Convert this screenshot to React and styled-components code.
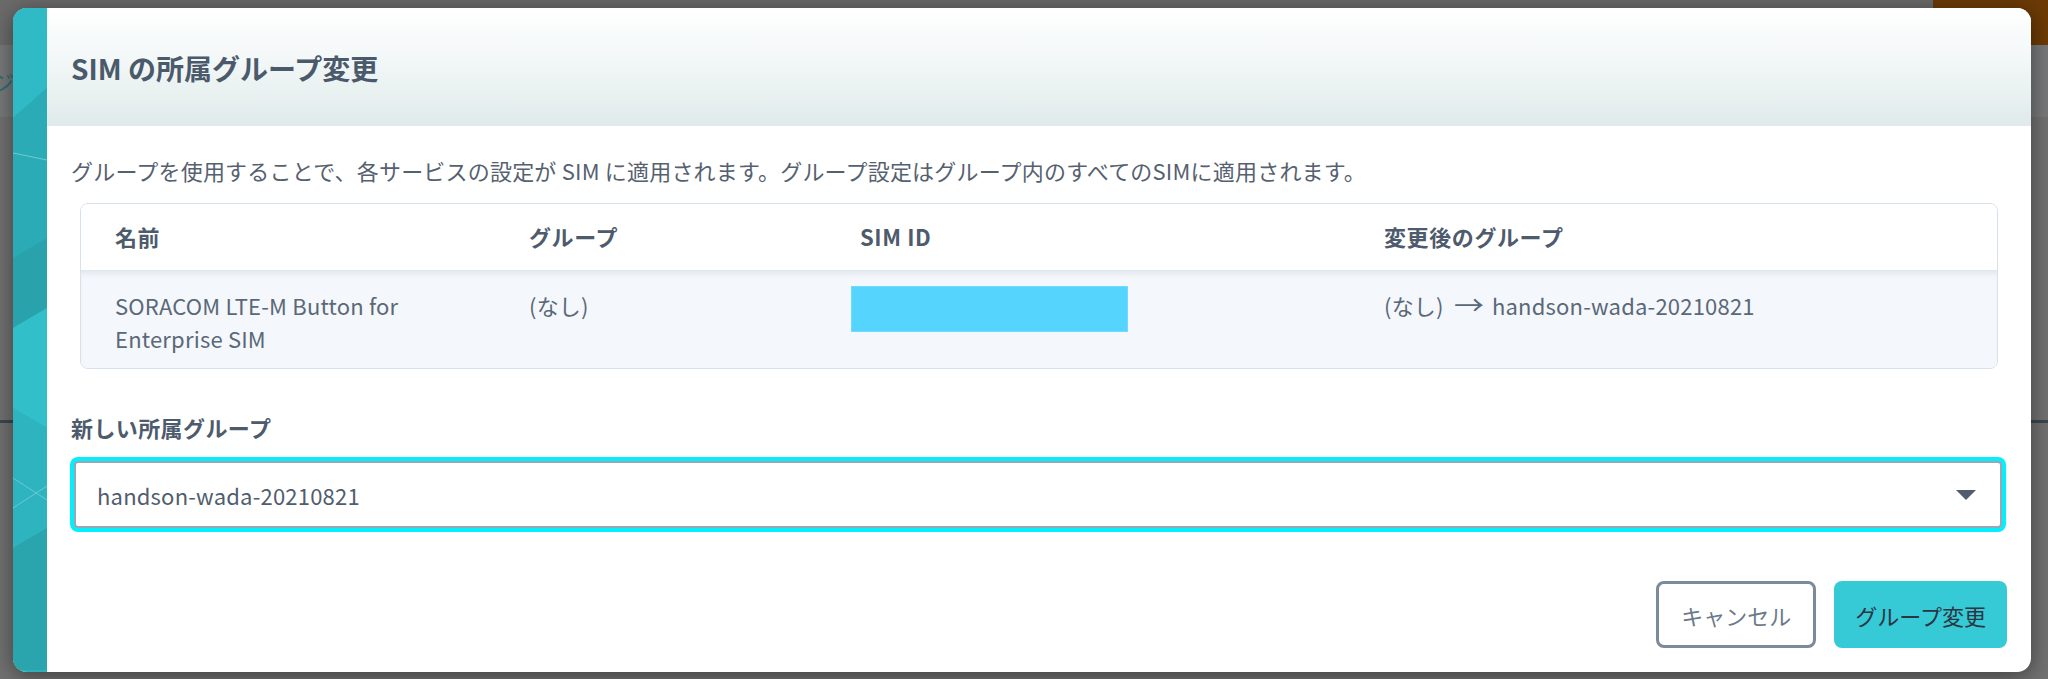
import React from "react";
import styled, { createGlobalStyle } from "styled-components";

const GlobalStyle = createGlobalStyle`
  html, body {
    margin: 0;
    padding: 0;
  }
  body {
    width: 2048px;
    height: 679px;
    overflow: hidden;
    background: #707070;
    font-family: "Noto Sans CJK JP", "Noto Sans", sans-serif;
  }
`;

// dimmed page behind the dialog
const Page = styled.div`
  position: relative;
  width: 2048px;
  height: 679px;
  background: #717171;
  overflow: hidden;
`;

const PageTop = styled.div`
  height: 45px;
  background: #6b6b6b;
  display: flex;
  justify-content: flex-end;
`;

const PageBadge = styled.div`
  width: 115px;
  height: 45px;
  background: #6c3a06;
`;

const PageNav = styled.div`
  height: 72px;
  background: #777879;
  color: #2d6e73;
  font-size: 22px;
  line-height: 72px;
  text-indent: -8px;
`;

const PageRule = styled.div`
  margin-top: 303px;
  height: 3px;
  background: #3d4650;
`;

const Modal = styled.div`
  position: absolute;
  left: 13px;
  top: 8px;
  width: 2018px;
  display: flex;
  background: #fff;
  border-radius: 14px;
  overflow: hidden;
  box-shadow: 0 4px 22px rgba(0, 0, 0, 0.45);
`;

const SideBand = styled.div`
  width: 34px;
  flex: none;
  background: #2cb0ba;
  svg {
    display: block;
  }
`;

const Main = styled.div`
  flex: 1;
  display: flex;
  flex-direction: column;
  min-width: 0;
`;

const Header = styled.div`
  height: 118px;
  box-sizing: border-box;
  padding: 4px 24px 0;
  display: flex;
  align-items: center;
  background: linear-gradient(180deg, #ffffff 0%, #f2f7f7 45%, #e0eaea 100%);
`;

const Title = styled.h1`
  margin: 0;
  font-size: 28px;
  font-weight: 700;
  color: #4b5a6b;
  line-height: 1.2;
`;

const Body = styled.div`
  padding: 28px 24px 24px;
  display: flex;
  flex-direction: column;
`;

const Lead = styled.p`
  margin: 0;
  font-size: 22px;
  line-height: 33px;
  letter-spacing: 0.2px;
  color: #56616f;
`;

const TableBox = styled.div`
  margin: 16px 9px 0;
  border: 1px solid #d6e1eb;
  border-radius: 8px;
  overflow: hidden;
`;

const Row = styled.div`
  display: grid;
  grid-template-columns: 414px 331px 524px 1fr;
  background: ${(p) => (p.$head ? "#ffffff" : "#f4f7fb")};
  box-shadow: ${(p) => (p.$head ? "none" : "inset 0 6px 6px -4px rgba(180, 195, 215, 0.45)")};
`;

const Cell = styled.div`
  box-sizing: border-box;
  padding: ${(p) => (p.$head ? "16px 34px 17px" : "19px 34px 13px")};
  font-size: 22px;
  line-height: 33px;
  font-weight: ${(p) => (p.$head ? 700 : 400)};
  letter-spacing: ${(p) => (p.$head ? "0.6px" : "0.2px")};
  color: ${(p) => (p.$head ? "#4d5b6c" : "#5a6878")};
`;

const Redacted = styled.div`
  width: 277px;
  height: 46px;
  margin: -3px 0 0 -9px;
  background: #55d4fd;
  box-shadow: inset 0 0 0 1px #6fdcff;
`;

const Arrow = styled.span`
  display: inline-block;
  margin: 0 10px 0 12px;
  font-size: 26px;
  line-height: 1;
  transform: scaleX(1.15);
`;

const Label = styled.div`
  margin-top: 42px;
  font-size: 22px;
  line-height: 33px;
  font-weight: 700;
  letter-spacing: 0.4px;
  color: #4d5b6c;
`;

const Select = styled.div`
  margin: 17px 5px 0 3px;
  height: 67px;
  box-sizing: border-box;
  border: 2px solid #98a6b6;
  border-radius: 4px;
  box-shadow: 0 0 0 4px #05eefb;
  padding: 0 24px 0 21px;
  display: flex;
  align-items: center;
  justify-content: space-between;
  font-size: 22px;
  letter-spacing: 0.2px;
  color: #4f5d6e;
  background: #fff;
`;

const Footer = styled.div`
  margin-top: 53px;
  display: flex;
  justify-content: flex-end;
  gap: 18px;
`;

const Button = styled.button`
  height: 67px;
  box-sizing: border-box;
  padding: 0 ${(p) => (p.$primary ? "21px" : "22px")};
  border-radius: 8px;
  font-family: inherit;
  font-size: 22px;
  border: ${(p) => (p.$primary ? "none" : "3px solid #7a8a9b")};
  background: ${(p) => (p.$primary ? "#35cad6" : "#ffffff")};
  color: ${(p) => (p.$primary ? "#2c3541" : "#6b7a8b")};
  cursor: pointer;
`;

const Band = () => (
  <svg width="34" height="662" viewBox="0 0 34 662">
    <polygon points="0,0 34,0 34,80 0,110" fill="#30bac5" />
    <polygon points="0,110 34,80 34,230 0,250" fill="#2aabb5" />
    <polygon points="0,250 34,230 34,300 0,320" fill="#29a2ac" />
    <polygon points="0,320 34,300 34,420 0,400" fill="#31c0ca" />
    <polygon points="0,400 34,420 34,520 0,540" fill="#2db4be" />
    <polygon points="0,540 34,520 34,662 0,662" fill="#2aa4ad" />
    <line x1="0" y1="145" x2="34" y2="152" stroke="#bfeef2" strokeWidth="0.8" opacity="0.6" />
    <line x1="0" y1="470" x2="34" y2="492" stroke="#bfeef2" strokeWidth="0.8" opacity="0.5" />
    <line x1="0" y1="500" x2="34" y2="478" stroke="#bfeef2" strokeWidth="0.8" opacity="0.5" />
  </svg>
);

const Caret = () => (
  <svg width="20" height="10" viewBox="0 0 20 10">
    <polygon points="0,0 20,0 10,10" fill="#4f5d6e" />
  </svg>
);

export default function App() {
  return (
    <>
      <GlobalStyle />
      <Page>
        <PageTop>
          <PageBadge />
        </PageTop>
        <PageNav>ジ</PageNav>
        <PageRule />
        <Modal>
          <SideBand>
            <Band />
          </SideBand>
          <Main>
            <Header>
              <Title>SIM の所属グループ変更</Title>
            </Header>
            <Body>
              <Lead>
                グループを使用することで、各サービスの設定が SIM に適用されます。グループ設定はグループ内のすべてのSIMに適用されます。
              </Lead>
              <TableBox>
                <Row $head>
                  <Cell $head>名前</Cell>
                  <Cell $head>グループ</Cell>
                  <Cell $head>SIM ID</Cell>
                  <Cell $head>変更後のグループ</Cell>
                </Row>
                <Row>
                  <Cell>
                    SORACOM LTE-M Button for
                    <br />
                    Enterprise SIM
                  </Cell>
                  <Cell>(なし)</Cell>
                  <Cell>
                    <Redacted />
                  </Cell>
                  <Cell>
                    (なし)<Arrow>→</Arrow>handson-wada-20210821
                  </Cell>
                </Row>
              </TableBox>
              <Label>新しい所属グループ</Label>
              <Select>
                <span>handson-wada-20210821</span>
                <Caret />
              </Select>
              <Footer>
                <Button>キャンセル</Button>
                <Button $primary>グループ変更</Button>
              </Footer>
            </Body>
          </Main>
        </Modal>
      </Page>
    </>
  );
}
